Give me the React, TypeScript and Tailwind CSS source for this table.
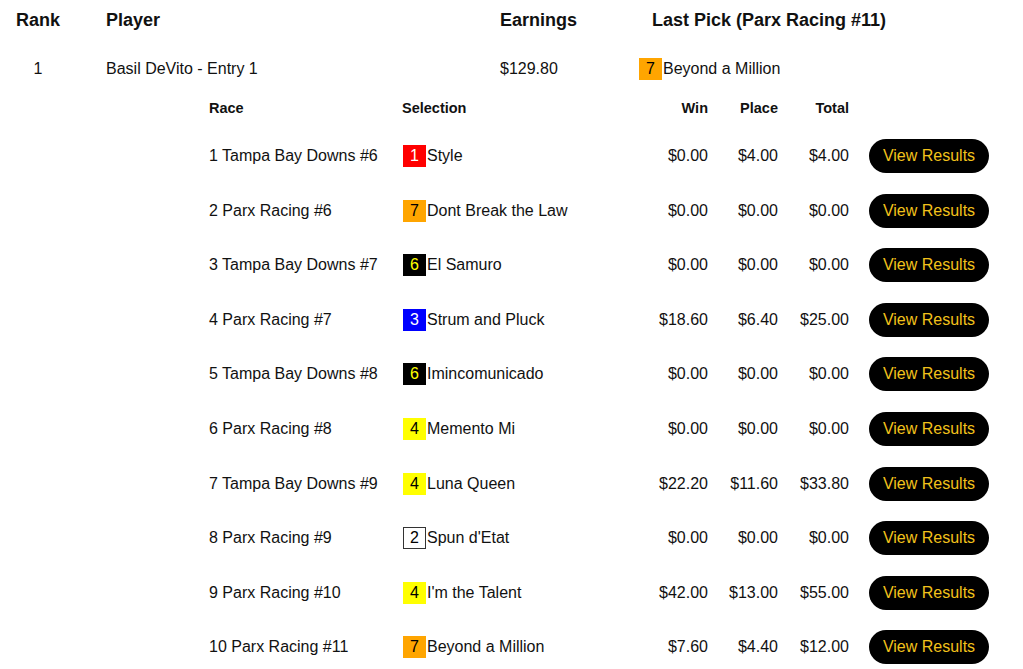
import React from "react";

type Pick = {
  race: string;
  num: string;
  box: string;
  name: string;
  win: string;
  place: string;
  total: string;
};

const picks: Pick[] = [
  { race: "1 Tampa Bay Downs #6", num: "1", box: "bg-[#ff0000] text-white", name: "Style", win: "$0.00", place: "$4.00", total: "$4.00" },
  { race: "2 Parx Racing #6", num: "7", box: "bg-[#ffa500] text-black", name: "Dont Break the Law", win: "$0.00", place: "$0.00", total: "$0.00" },
  { race: "3 Tampa Bay Downs #7", num: "6", box: "bg-black text-[#ffff00]", name: "El Samuro", win: "$0.00", place: "$0.00", total: "$0.00" },
  { race: "4 Parx Racing #7", num: "3", box: "bg-[#0000ff] text-white", name: "Strum and Pluck", win: "$18.60", place: "$6.40", total: "$25.00" },
  { race: "5 Tampa Bay Downs #8", num: "6", box: "bg-black text-[#ffff00]", name: "Imincomunicado", win: "$0.00", place: "$0.00", total: "$0.00" },
  { race: "6 Parx Racing #8", num: "4", box: "bg-[#ffff00] text-black", name: "Memento Mi", win: "$0.00", place: "$0.00", total: "$0.00" },
  { race: "7 Tampa Bay Downs #9", num: "4", box: "bg-[#ffff00] text-black", name: "Luna Queen", win: "$22.20", place: "$11.60", total: "$33.80" },
  { race: "8 Parx Racing #9", num: "2", box: "bg-white text-black border border-[#333]", name: "Spun d'Etat", win: "$0.00", place: "$0.00", total: "$0.00" },
  { race: "9 Parx Racing #10", num: "4", box: "bg-[#ffff00] text-black", name: "I'm the Talent", win: "$42.00", place: "$13.00", total: "$55.00" },
  { race: "10 Parx Racing #11", num: "7", box: "bg-[#ffa500] text-black", name: "Beyond a Million", win: "$7.60", place: "$4.40", total: "$12.00" },
];

function NumBox({ num, cls }: { num: string; cls: string }) {
  return (
    <span className={`inline-flex h-[22px] w-[23px] items-center justify-center text-[16px] leading-none ${cls}`}>
      {num}
    </span>
  );
}

export default function App() {
  return (
    <div
      className="min-h-screen bg-white text-[#111]"
      style={{ fontFamily: '"Liberation Sans", Arial, Helvetica, sans-serif' }}
    >
      <div className="pl-4">
        {/* main header */}
        <div className="flex h-[41px] items-center text-[18px] font-bold">
          <div className="w-[44px] text-center">Rank</div>
          <div className="ml-[46px] w-[394px]">Player</div>
          <div className="w-[139px]">Earnings</div>
          <div className="pl-[13px]">Last Pick (Parx Racing #11)</div>
        </div>
        {/* entry row */}
        <div className="flex h-[56px] items-center text-[16px]">
          <div className="w-[44px] text-center">1</div>
          <div className="ml-[46px] w-[394px]">Basil DeVito - Entry 1</div>
          <div className="w-[139px]">$129.80</div>
          <div className="flex items-center">
            <NumBox num="7" cls="bg-[#ffa500] text-black" />
            <span className="ml-[1px]">Beyond a Million</span>
          </div>
        </div>
      </div>

      {/* nested table */}
      <div className="pl-[209px]">
        <div className="flex h-6 items-center text-[14.5px] font-bold">
          <div className="w-[193px]">Race</div>
          <div className="w-[228px]">Selection</div>
          <div className="w-[78px] text-right">Win</div>
          <div className="w-[70px] text-right">Place</div>
          <div className="w-[71px] text-right">Total</div>
        </div>
        <div className="pt-2">
          {picks.map((p, i) => (
            <div key={i} className="flex h-[54.56px] items-center text-[16px]">
              <div className="w-[193px]">{p.race}</div>
              <div className="flex w-[228px] items-center pl-px">
                <NumBox num={p.num} cls={p.box} />
                <span className="ml-[1px]">{p.name}</span>
              </div>
              <div className="w-[78px] text-right">{p.win}</div>
              <div className="w-[70px] text-right">{p.place}</div>
              <div className="w-[71px] text-right">{p.total}</div>
              <div className="pl-[20px]">
                <button className="flex h-[34px] w-[120px] items-center justify-center rounded-full bg-black text-[16px] text-[#f2c21b]">
                  View Results
                </button>
              </div>
            </div>
          ))}
        </div>
      </div>
    </div>
  );
}
